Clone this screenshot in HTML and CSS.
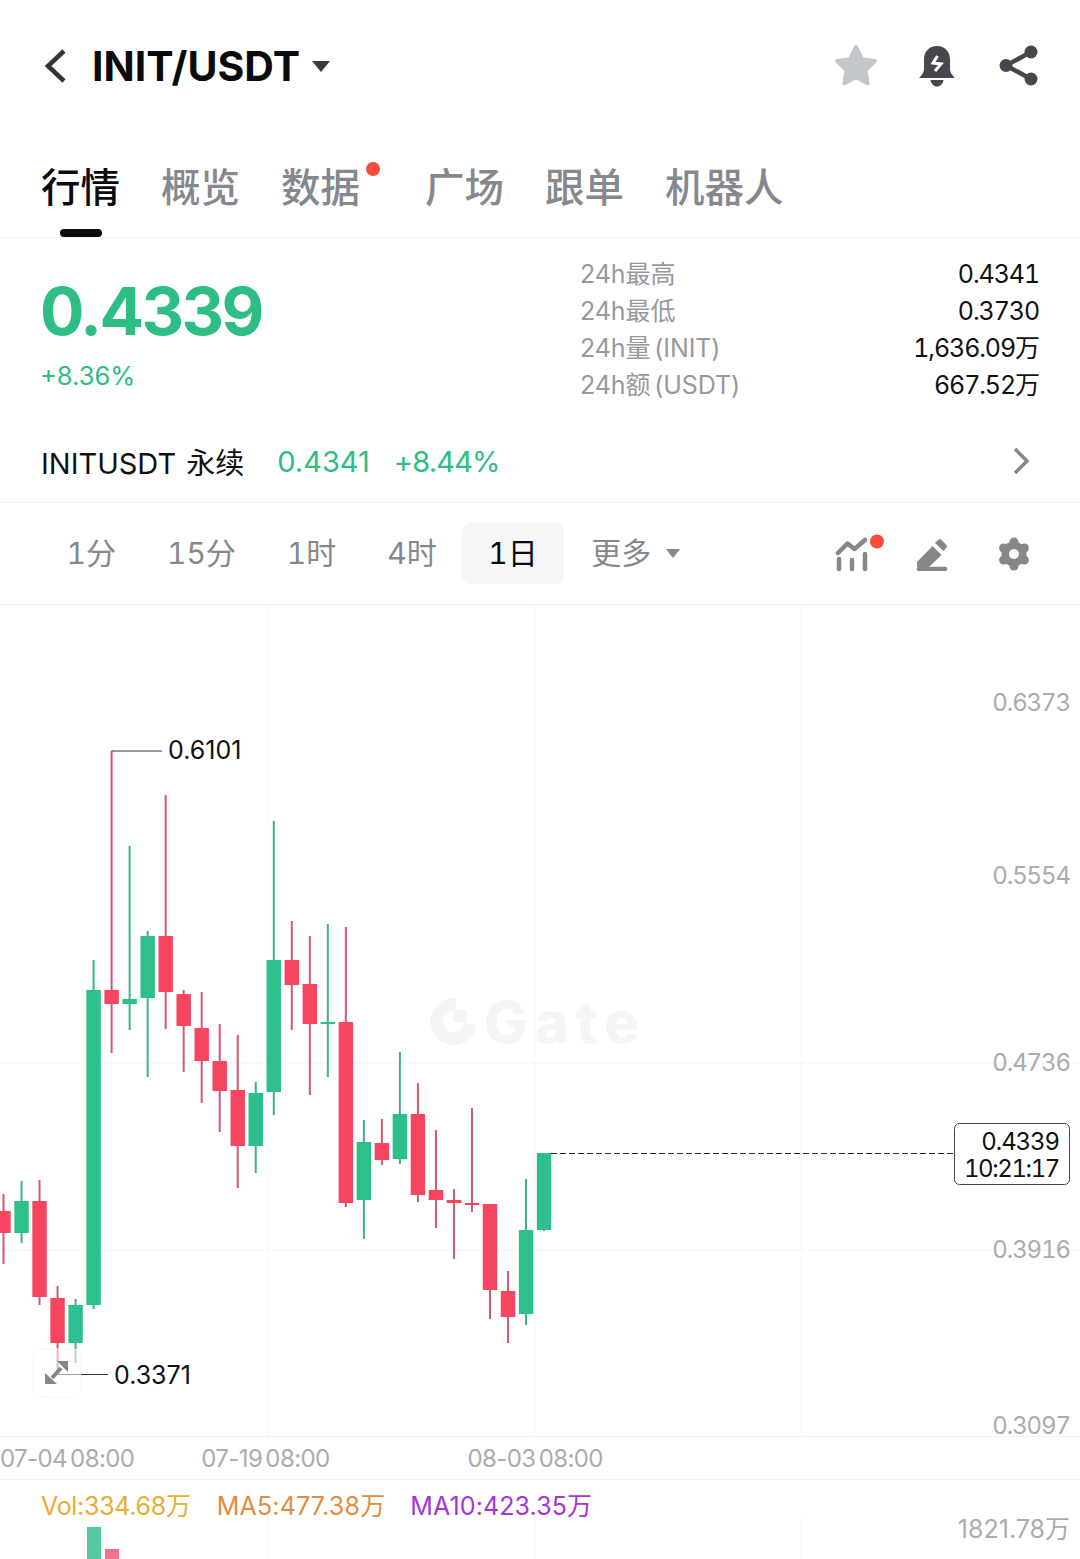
FILE: index.html

```html
<!DOCTYPE html>
<html lang="en">
<head>
  <meta charset="UTF-8" />
  <meta name="viewport" content="width=device-width, initial-scale=1.0" />
  <title>INIT/USDT</title>
  <link rel="stylesheet" href="styles.css">
</head>
<body>
  <div class="app">
    <header class="topbar">
      <svg class="back-icon" width="24" height="36" viewBox="0 0 24 36"><path d="M20 3 L4 18 L20 33" /></svg>
      <h1 class="pair">INIT/USDT</h1>
      <svg class="pair-caret" width="20" height="12" viewBox="0 0 20 12"><path d="M1 1 H19 L10 12 Z" /></svg>
      <div class="top-actions">
        <svg width="46" height="46" viewBox="0 0 44 44"><path class="star" d="M22 4 L27.500 15.500 L40 17.300 L31 26 L33 38.500 L22 32.500 L11 38.500 L13 26 L4 17.300 L16.500 15.500 Z" /></svg>
        <svg width="38" height="42" viewBox="1 0 38 42">
          <path class="dark-fill" d="M19 1 C27 1 32 7 32 14 V24 C32 28 35 31 37 33 H1 C3 31 6 28 6 24 V14 C6 7 11 1 19 1 Z" />
          <path class="dark-fill" d="M12.500 35 H25.500 C25 39 22 41.500 19 41.500 C16 41.500 13 39 12.500 35 Z" />
          <path class="bolt" d="M19.500 11 L15 18 L23 19 L17 26" />
        </svg>
        <svg class="share-icon" width="40" height="42" viewBox="0 0 40 42">
          <path class="share-line" d="M32 7 L7 20.500 L32 34" />
          <circle class="dark-fill" cx="32" cy="7" r="6.500" />
          <circle class="dark-fill" cx="7" cy="20.500" r="6.500" />
          <circle class="dark-fill" cx="32" cy="34" r="6.500" />
        </svg>
      </div>
    </header>

    <nav class="tabs">
      <span class="tab active">行情</span>
      <span class="tab">概览</span>
      <span class="tab has-dot">数据</span>
      <span class="tab">广场</span>
      <span class="tab">跟单</span>
      <span class="tab">机器人</span>
    </nav>

    <section class="ticker">
      <div class="price-block">
        <div class="price">0.4339</div>
        <div class="change">+8.36%</div>
      </div>
      <dl class="stats">
        <div class="stat"><dt>24h最高</dt><dd>0.4341</dd></div>
        <div class="stat"><dt>24h最低</dt><dd>0.3730</dd></div>
        <div class="stat"><dt>24h量 (INIT)</dt><dd>1,636.09万</dd></div>
        <div class="stat"><dt>24h额 (USDT)</dt><dd>667.52万</dd></div>
      </dl>
    </section>

    <section class="perp">
      <span class="perp-name">INITUSDT 永续</span>
      <span class="perp-num">0.4341</span>
      <span class="perp-num perp-change">+8.44%</span>
      <svg class="perp-arrow" width="18" height="28" viewBox="0 0 18 28"><path d="M3 2 L15 14 L3 26" /></svg>
    </section>

    <section class="intervals">
      <span class="interval">1分</span>
      <span class="interval">15分</span>
      <span class="interval">1时</span>
      <span class="interval">4时</span>
      <span class="interval active">1日</span>
      <span class="interval more">更多<svg width="14" height="9" viewBox="0 0 14 9"><path d="M0 0 H14 L7 9 Z" /></svg></span>
      <div class="chart-tools">
        <svg width="50" height="40" viewBox="835 535 50 40">
          <path class="tool-line" d="M838 554 L847.500 544.500 L854.500 550 L865 541" />
          <path class="tool-bar" d="M839 560 V570 M852 561 V570 M865 555 V570" />
          <circle class="dot-fill" cx="877" cy="542.500" r="7" />
        </svg>
        <svg width="34" height="34" viewBox="915 537 34 34">
          <path class="tool-fill" d="M917 562 L932.500 546 L941.500 555 L929 567 H917 Z" />
          <path class="tool-fill" d="M935 543 L938.500 539.500 Q940 538.500 941 539.500 L946.500 545 Q947.500 546 946.500 547.500 L943.500 551 Z" />
          <path class="tool-line" d="M919 569 H945" />
        </svg>
        <svg class="gear-icon" width="34" height="36" viewBox="-17 -18 34 36">
          <circle class="tool-fill" cx="0" cy="0" r="12.500" />
          <circle class="tool-fill" cx="0" cy="-12" r="4.500" />
          <circle class="tool-fill" cx="10.400" cy="-6" r="4.500" />
          <circle class="tool-fill" cx="10.400" cy="6" r="4.500" />
          <circle class="tool-fill" cx="0" cy="12" r="4.500" />
          <circle class="tool-fill" cx="-10.400" cy="6" r="4.500" />
          <circle class="tool-fill" cx="-10.400" cy="-6" r="4.500" />
          <circle cx="0" cy="0" r="5" fill="#fff" />
        </svg>
      </div>
    </section>

    <section class="chart">
      <svg class="chart-svg" width="1080" height="832" viewBox="0 605 1080 832">
        <path class="grid" d="M267.500 605 V1437 M534.500 605 V1437 M801.500 605 V1437 M0 1063 H1080 M0 1250 H1080" />

        <g class="watermark">
          <path class="wm-ring" d="M456 1004.700 A17 17 0 1 0 470.500 1024" />
          <rect x="453" y="1010" width="14" height="12" />
          <text x="484" y="1043">Gate</text>
        </g>

        <g transform="scale(1.001 1)">
          <path class="wick down" d="M3.500 1194V1264 M39.500 1180V1305 M57.500 1286V1373 M111.500 751V1053 M165.500 795V1029 M183.500 990V1072 M201.500 992V1103 M219.500 1024V1132 M237.500 1035V1188 M291.500 921V1030 M309.500 936V1095 M345.500 927V1207 M381.500 1119V1165 M417.500 1083V1202 M435.500 1130V1228 M453.500 1189V1259 M471.500 1108V1212 M489.500 1204V1319 M507.500 1271V1343" />
          <path class="wick up" d="M21.500 1181V1243 M75.500 1299V1363 M93.500 960V1309 M129.500 846V1030 M147.500 931V1077 M255.500 1082V1173 M273.500 821V1115 M327.500 924V1077 M363.500 1120V1239 M399.500 1052V1164 M525.500 1179V1325 M543.500 1153V1231" />
          <path class="body down" d="M3.500 1211V1233 M39.500 1201V1297 M57.500 1298V1343 M111.500 990V1004 M165.500 936V992 M183.500 994V1026 M201.500 1028V1061 M219.500 1061V1091 M237.500 1090V1146 M291.500 960V985 M309.500 984V1024 M345.500 1022V1203 M381.500 1143V1160 M417.500 1114V1195 M435.500 1190V1200 M453.500 1200V1203 M471.500 1203V1205 M489.500 1204V1290 M507.500 1291V1317" />
          <path class="body up" d="M21.500 1201V1233 M75.500 1305V1343 M93.500 990V1305 M129.500 999V1004 M147.500 936V998 M255.500 1093V1146 M273.500 960V1092 M327.500 1022V1024 M363.500 1142V1200 M399.500 1114V1159 M525.500 1230V1314 M543.500 1153V1230" />
        </g>

        <path class="marker" d="M162 751 H111.500 M108 1374.500 H57.500" />
        <text class="marker-text" x="168" y="758.500">0.6101</text>

        <rect class="expand-box" x="33" y="1349" width="48" height="48" rx="8" />
        <path class="expand-arrow" d="M57 1361 H68 V1372 Z M45 1373 L57 1384 H45 Z" />
        <path class="expand-stem" d="M61 1368 L52 1378" />
        <path class="marker" d="M81 1374.500 H108" />
        <text class="marker-text" x="114" y="1383.500">0.3371</text>

        <text class="axis" x="1070" y="710.500">0.6373</text>
        <text class="axis" x="1070" y="883.500">0.5554</text>
        <text class="axis" x="1070" y="1070.500">0.4736</text>
        <text class="axis" x="1070" y="1257.500">0.3916</text>
        <text class="axis" x="1070" y="1433.500">0.3097</text>

        <path class="last-line" d="M551 1153.500 H954" />
        <rect class="last-box" x="954.500" y="1123.500" width="115" height="61" rx="5" />
        <text class="last-text" x="1059" y="1150">0.4339</text>
        <text class="last-text last-time" x="1059" y="1177">10:21:17</text>
      </svg>
    </section>

    <div class="time-axis">
      <span>07-04 08:00</span>
      <span>07-19 08:00</span>
      <span class="time-last">08-03 08:00</span>
    </div>

    <section class="volume">
      <svg class="volume-svg" width="1080" height="79" viewBox="0 1480 1080 79">
        <path class="grid" d="M267.500 1516 V1559 M534.500 1516 V1559 M801.500 1516 V1559" />
        <path class="vol-bar up" d="M94 1527 V1559" />
        <path class="vol-bar down" d="M112 1549 V1559" />
      </svg>
      <div class="vol-legend">
        <span class="vol-main">Vol:334.68万</span>
        <span class="vol-ma5">MA5:477.38万</span>
        <span class="vol-ma10">MA10:423.35万</span>
      </div>
      <div class="vol-max">1821.78万</div>
    </section>
  </div>
</body>
</html>
```

FILE: styles.css

```css
* {
  box-sizing: border-box;
}
body {
  margin: 0;
  background: #fff;
  font-family: Inter, "Noto Sans CJK SC", sans-serif;
  color: #111;
}
.app {
  width: 1080px;
  height: 1559px;
  overflow: hidden;
}

/* top bar */
.topbar {
  display: flex;
  align-items: center;
  height: 132px;
  padding: 0 41px 0 44px;
}
.back-icon path {
  fill: none;
  stroke: #333;
  stroke-width: 4.5;
}
.pair {
  margin: 0 0 0 24px;
  font-size: 41px;
  font-weight: 700;
  color: #0b0b0d;
}
.pair-caret {
  margin-left: 11px;
  fill: #3a3b40;
}
.top-actions {
  display: flex;
  align-items: center;
  gap: 40px;
  margin-left: auto;
}
.star {
  fill: #c4c7ca;
  stroke: #c4c7ca;
  stroke-width: 4;
  stroke-linejoin: round;
}
.dark-fill {
  fill: #45474d;
}
.bolt {
  fill: none;
  stroke: #fff;
  stroke-width: 3;
}
.share-icon {
  margin-left: 2px;
}
.share-line {
  fill: none;
  stroke: #45474d;
  stroke-width: 4.5;
}

/* tabs */
.tabs {
  display: flex;
  gap: 41px;
  height: 106px;
  padding: 29px 0 0 41px;
  border-bottom: 1px solid #f2f3f4;
}
.tab {
  position: relative;
  height: 54px;
  font-size: 39.5px;
  line-height: 54px;
  font-weight: 500;
  color: #85888c;
}
.tab.active {
  color: #0b0b0d;
}
.tab.active::after {
  content: "";
  position: absolute;
  left: 19px;
  top: 68px;
  width: 42px;
  height: 8px;
  border-radius: 4px;
  background: #0b0b0d;
}
.tab.has-dot {
  margin-right: 24px;
}
.tab.has-dot::after {
  content: "";
  position: absolute;
  right: -20px;
  top: 1px;
  width: 14px;
  height: 14px;
  border-radius: 50%;
  background: #f44d3f;
}

/* price */
.ticker {
  display: flex;
  justify-content: space-between;
  height: 187px;
  padding: 18px 41px 0;
}
.price {
  margin-top: 19px;
  margin-left: -1px;
  font-size: 66px;
  line-height: 72px;
  font-weight: 700;
  letter-spacing: -2.6px;
  color: #2dbd85;
}
.change {
  margin-top: 11px;
  margin-left: -1px;
  font-size: 25.5px;
  line-height: 36px;
  color: #2dbd85;
}
.stats {
  width: 459px;
  margin: 0;
}
.stat {
  display: flex;
  justify-content: space-between;
  height: 37px;
  font-size: 25px;
  line-height: 37px;
}
.stat dt {
  letter-spacing: -0.1px;
  word-spacing: -3px;
  color: #97999c;
}
.stat dd {
  margin: 0;
  font-variant-numeric: tabular-nums;
  letter-spacing: -1.1px;
  color: #111;
}

.perp {
  display: flex;
  align-items: center;
  gap: 24px;
  height: 78px;
  padding: 0 50px 5px 41px;
  border-bottom: 1px solid #f2f3f4;
  font-size: 29px;
}
.perp-name {
  margin-right: 9px;
  word-spacing: 2px;
  color: #111;
}
.perp-num {
  color: #2dbd85;
}
.perp-change {
  letter-spacing: -0.8px;
}
.perp-arrow {
  margin-left: auto;
}
.perp-arrow path {
  fill: none;
  stroke: #85888c;
  stroke-width: 3.5;
}

/* interval row */
.intervals {
  display: flex;
  align-items: center;
  height: 102px;
  padding: 0 49px 0 41px;
  border-bottom: 1px solid #f2f3f4;
  font-size: 30px;
  font-variant-numeric: tabular-nums;
  color: #85888c;
}
.interval {
  padding: 0 25.5px;
  height: 61px;
  line-height: 61px;
  border-radius: 8px;
}
.interval.active {
  padding: 0 26px;
  background: #f5f6f7;
  color: #0b0b0d;
}
.interval.more {
  display: flex;
  align-items: center;
  gap: 15px;
  margin-left: 2px;
  fill: #85888c;
}
.chart-tools {
  display: flex;
  align-items: center;
  gap: 30px;
  margin-left: auto;
}
.gear-icon {
  margin-left: 18px;
}
.tool-line {
  fill: none;
  stroke: #85888b;
  stroke-width: 4.5;
  stroke-linecap: round;
  stroke-linejoin: round;
}
.tool-bar {
  fill: none;
  stroke: #85888b;
  stroke-width: 4.5;
  stroke-linecap: round;
}
.tool-fill {
  fill: #85888b;
}
.dot-fill {
  fill: #f44d3f;
}

/* chart */
.chart {
  height: 832px;
  border-bottom: 1px solid #f2f3f4;
}
.chart-svg,
.volume-svg {
  display: block;
  overflow: visible;
}
.grid {
  fill: none;
  stroke: #f5f5f6;
  stroke-width: 1;
}
.watermark {
  fill: #f4f5f5;
}
.watermark text {
  font-size: 58px;
  font-weight: 800;
  letter-spacing: 7px;
}
.wm-ring {
  fill: none;
  stroke: #f4f5f5;
  stroke-width: 13;
}
.wick {
  fill: none;
  stroke-width: 2;
}
.wick.down {
  stroke: #d4566f;
}
.wick.up {
  stroke: #3fb28b;
}
.body {
  fill: none;
  stroke-width: 14.4;
}
.body.down {
  stroke: #f6455f;
}
.body.up {
  stroke: #2dc08a;
}
.marker {
  fill: none;
  stroke: #333;
  stroke-width: 1;
}
.marker-text {
  font-size: 25px;
  fill: #111;
}
.expand-box {
  fill: #fff;
  fill-opacity: 0.55;
  stroke: #f7f7f8;
}
.expand-arrow {
  fill: #85888b;
}
.expand-stem {
  stroke: #85888b;
  stroke-width: 4;
}
.axis {
  font-size: 24px;
  letter-spacing: -1.1px;
  font-variant-numeric: tabular-nums;
  fill: #aaacae;
  text-anchor: end;
}
.last-line {
  fill: none;
  stroke: #222;
  stroke-width: 1;
  stroke-dasharray: 6 3;
}
.last-box {
  fill: #fff;
  stroke: #444;
}
.last-text {
  font-size: 24px;
  letter-spacing: -1.1px;
  font-variant-numeric: tabular-nums;
  fill: #111;
  text-anchor: end;
}
.last-time {
  letter-spacing: -1.4px;
}

.time-axis {
  display: flex;
  gap: 67px;
  height: 43px;
  border-bottom: 1px solid #f2f3f4;
  font-size: 24px;
  letter-spacing: -0.6px;
  word-spacing: -3px;
  line-height: 43px;
  color: #aaacae;
}
.time-last {
  margin-left: 71px;
}

/* volume */
.volume {
  position: relative;
  height: 79px;
}
.volume-svg {
  position: absolute;
  left: 0;
  top: 0;
}
.vol-bar {
  fill: none;
  stroke-width: 14;
}
.vol-bar.up {
  stroke: #55c9a0;
}
.vol-bar.down {
  stroke: #f5708a;
}
.vol-legend {
  position: relative;
  display: flex;
  gap: 26px;
  padding: 8px 0 0 41px;
  font-size: 25px;
  line-height: 36px;
}
.vol-main {
  color: #e8ae2f;
  letter-spacing: -0.3px;
}
.vol-ma5 {
  color: #e08e3b;
  letter-spacing: 0.2px;
}
.vol-ma10 {
  margin-left: -1px;
  color: #a635d8;
  letter-spacing: 0.1px;
}
.vol-max {
  position: relative;
  margin-top: -13px;
  padding-right: 10px;
  text-align: right;
  font-size: 25px;
  line-height: 36px;
  color: #aaacae;
}
```
